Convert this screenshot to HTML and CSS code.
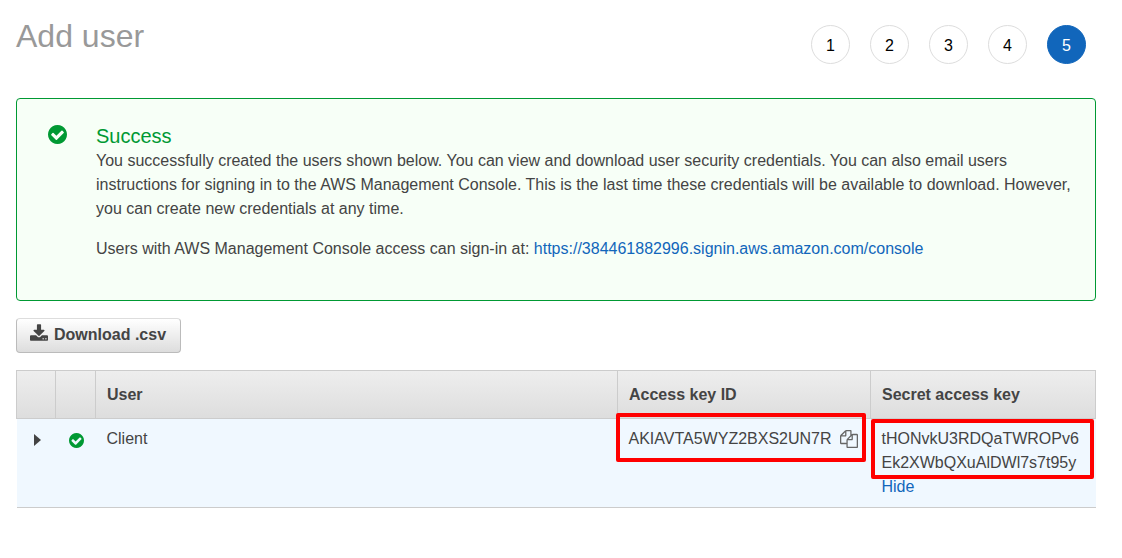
FILE: index.html
```html
<!DOCTYPE html>
<html lang="en">
<head>
<meta charset="utf-8">
<meta name="viewport" content="width=device-width, initial-scale=1">
<title>Add user</title>
<link rel="stylesheet" href="styles.css">
</head>
<body>
<svg class="icon-defs" aria-hidden="true">
  <symbol id="check-circle" viewBox="0 0 1536 1536"><path d="M1284 606q0-28-18-46l-91-90q-19-19-45-19t-45 19l-408 407-226-226q-19-19-45-19t-45 19l-91 90q-18 18-18 46 0 27 18 45l362 362q19 19 45 19 27 0 46-19l543-543q18-18 18-45zM1536 768q0 209-103 385.500t-279.500 279.500-385.500 103-385.500-103-279.500-279.500-103-385.500 103-385.500 279.500-279.500 385.500-103 385.500 103 279.500 279.500 103 385.500z"/></symbol>
  <symbol id="download" viewBox="64 0 1664 1536"><path d="M1344 1344q0-26-19-45t-45-19-45 19-19 45 19 45 45 19 45-19 19-45zm256 0q0-26-19-45t-45-19-45 19-19 45 19 45 45 19 45-19 19-45zm128-224v320q0 40-28 68t-68 28h-1472q-40 0-68-28t-28-68v-320q0-40 28-68t68-28h465l135 136q58 56 136 56t136-56l136-136h464q40 0 68 28t28 68zm-325-569q17 41-14 70l-448 448q-18 19-45 19t-45-19l-448-448q-31-29-14-70 17-39 59-39h256v-448q0-26 19-45t45-19h256q26 0 45 19t19 45v448h256q42 0 59 39z"/></symbol>
  <symbol id="copy" viewBox="0 0 1792 1792"><path d="M1696 384q40 0 68 28t28 68v1216q0 40-28 68t-68 28h-960q-40 0-68-28t-28-68v-288h-544q-40 0-68-28t-28-68v-672q0-40 20-88t48-76l408-408q28-28 76-48t88-20h416q40 0 68 28t28 68v328q68-40 128-40h416zm-544 213l-299 299h299v-299zm-640-384l-299 299h299v-299zm196 647l316-316v-416h-384v416q0 40-28 68t-68 28h-416v640h512v-256q0-40 20-88t48-76zm956 804v-1152h-384v416q0 40-28 68t-68 28h-416v640h896z"/></symbol>
</svg>
<main class="page">
  <header class="page-header">
    <h1 class="title">Add user</h1>
    <ol class="steps">
      <li class="step">1</li>
      <li class="step">2</li>
      <li class="step">3</li>
      <li class="step">4</li>
      <li class="step step-current" aria-current="step">5</li>
    </ol>
  </header>

  <section class="alert">
    <svg class="alert-icon" aria-hidden="true"><use href="#check-circle"/></svg>
    <div class="alert-body">
      <h2 class="alert-title">Success</h2>
      <p class="alert-text">You successfully created the users shown below. You can view and download user security credentials. You can also email users instructions for signing in to the AWS Management Console. This is the last time these credentials will be available to download. However, you can create new credentials at any time.</p>
      <p class="alert-text">Users with AWS Management Console access can sign-in at: <a class="link" href="#console">https://384461882996.signin.aws.amazon.com/console</a></p>
    </div>
  </section>

  <button class="download" type="button"><svg class="download-icon" aria-hidden="true"><use href="#download"/></svg>Download .csv</button>

  <table class="users">
    <colgroup>
      <col class="col-expand"><col class="col-status"><col><col class="col-key"><col class="col-secret">
    </colgroup>
    <thead>
      <tr><th></th><th></th><th>User</th><th>Access key ID</th><th>Secret access key</th></tr>
    </thead>
    <tbody>
      <tr>
        <td class="cell-icon"><button class="icon-button" type="button" aria-label="Expand"><svg class="caret" viewBox="0 0 7 12" aria-hidden="true"><path d="M0 0l7 6-7 6z"/></svg></button></td>
        <td class="cell-icon"><svg class="status-icon" role="img" aria-label="Success"><use href="#check-circle"/></svg></td>
        <td>Client</td>
        <td>
          <div class="key marked marked-key">AKIAVTA5WYZ2BXS2UN7R<button class="icon-button" type="button" aria-label="Copy access key ID"><svg class="copy-icon" aria-hidden="true"><use href="#copy"/></svg></button></div>
        </td>
        <td>
          <div class="secret marked marked-secret">tHONvkU3RDQaTWROPv6Ek2XWbQXuAlDWl7s7t95y</div>
          <a class="link" href="#hide">Hide</a>
        </td>
      </tr>
    </tbody>
  </table>
</main>
</body>
</html>
```
FILE: styles.css
```css
* { box-sizing: border-box; }

body {
  margin: 0;
  background: #fff;
  color: #444;
  font: 16px/24px "Liberation Sans", Arial, sans-serif;
}

.icon-defs { display: none; }
.link { color: #1166bb; text-decoration: none; }
svg { display: block; fill: currentColor; }

.page { padding: 16px 26px 16px 16px; }

.page-header {
  display: flex;
  justify-content: space-between;
  align-items: flex-start;
  padding-right: 10px;
  margin-bottom: 34px;
}

.title {
  margin: 0;
  color: #999;
  font-size: 32px;
  line-height: 40px;
  font-weight: 400;
}

.steps {
  display: flex;
  gap: 20px;
  margin: 0;
  padding: 9px 0 0;
  list-style: none;
}

.step {
  width: 39px;
  height: 39px;
  border: 1px solid #ddd;
  border-radius: 50%;
  color: #000;
  line-height: 39px;
  text-align: center;
}

.step-current {
  border-color: #1166bb;
  background: #1166bb;
  color: #fff;
}

.alert {
  display: flex;
  gap: 29px;
  margin-bottom: 17px;
  padding: 24px 16px 39px 31px;
  border: 1px solid #093;
  border-radius: 4px;
  background: #f7fff7;
}

.alert-icon {
  flex: none;
  width: 19px;
  height: 19px;
  margin-top: 2px;
  color: #093;
}

.alert-title {
  margin: 0;
  color: #093;
  font-size: 20px;
  line-height: 26px;
  font-weight: 400;
}

.alert-text { margin: 0; }
.alert-text + .alert-text { margin-top: 16px; }

.download {
  display: flex;
  align-items: center;
  gap: 6px;
  height: 35px;
  margin-bottom: 17px;
  padding: 0 14px 2px 13px;
  border: 1px solid #bbb;
  border-top-color: #ddd;
  border-radius: 4px;
  background: linear-gradient(#fff, #ddd);
  color: #444;
  font: inherit;
  font-weight: 700;
}

.download-icon {
  width: 18px;
  height: 17px;
  margin-bottom: 4px;
}

.users {
  width: 100%;
  border-collapse: collapse;
  table-layout: fixed;
}

.col-expand { width: 39px; }
.col-status { width: 40px; }
.col-key { width: 253px; }
.col-secret { width: 225px; }

.users th {
  height: 48px;
  padding: 0 11px;
  border: 1px solid #ccc;
  text-align: left;
}

.users thead tr { background: linear-gradient(#eee, #ddd); }

.users tbody tr {
  border-bottom: 1px solid #ccc;
  background: #f0f8ff;
}

.users td {
  padding: 8px 11px;
  vertical-align: top;
}

.users .cell-icon { padding: 14px 0 0 2px; }

.icon-button {
  display: block;
  padding: 0;
  border: 0;
  background: none;
  color: inherit;
}

.cell-icon .icon-button { margin: 0 auto; }
.caret { width: 7px; height: 14px; }

.status-icon {
  width: 15px;
  height: 15px;
  margin: 0 auto;
  color: #093;
}

.key {
  display: flex;
  align-items: center;
  gap: 8px;
}

.copy-icon {
  width: 18px;
  height: 18px;
  color: #666;
}

.secret { overflow-wrap: anywhere; }
.marked { position: relative; }

/* Highlight frames drawn over the credentials */
.marked::after {
  content: "";
  position: absolute;
  border: 4px solid #f00;
  border-radius: 2px;
  pointer-events: none;
}

.marked-key::after { inset: -14px -6px -11px -13px; }
.marked-secret::after { inset: -8px -9px -4px -11px; }
```
